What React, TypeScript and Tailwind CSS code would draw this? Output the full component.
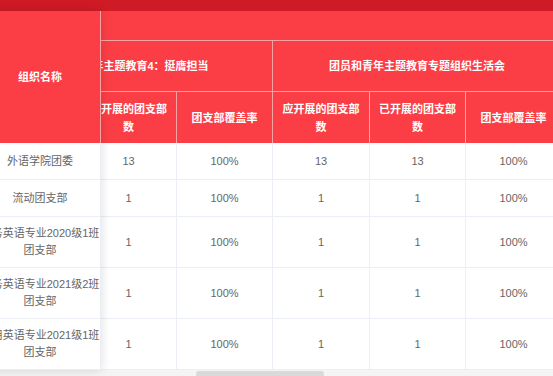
const font = { fontFamily: '"Liberation Sans", "Noto Sans CJK SC", sans-serif' }

const subHeads = ['应开展的团支部数', '已开展的团支部数', '团支部覆盖率']

type Row = {
  name: string[]
  values: string[]
}

const rows: Row[] = [
  { name: ['外语学院团委'], values: ['13', '13', '100%', '13', '13', '100%'] },
  { name: ['流动团支部'], values: ['1', '1', '100%', '1', '1', '100%'] },
  { name: ['商务英语专业2020级1班', '团支部'], values: ['1', '1', '100%', '1', '1', '100%'] },
  { name: ['商务英语专业2021级2班', '团支部'], values: ['1', '1', '100%', '1', '1', '100%'] },
  { name: ['应用英语专业2021级1班', '团支部'], values: ['1', '1', '100%', '1', '1', '100%'] },
]

const cols = 'grid grid-cols-[96px_96px_96px_97px_96px_96px]'

export default function App() {
  return (
    <div className="w-[553px] h-[376px] overflow-hidden bg-white text-[11px]" style={font}>
      <div className="h-[11px] bg-[#cf1b26]" />

      <div className="flex">
        {/* fixed name column */}
        <div className="relative z-10 -ml-[20px] w-[121px] shrink-0 bg-white shadow-[0_0_10px_rgba(0,0,0,0.14)]">
          <div className="h-[132px] flex items-center justify-center bg-[#fb3e45] border-r border-[#f9a3a5] text-white font-bold">
            组织名称
          </div>
          {rows.map((r) => (
            <div
              key={r.name.join('')}
              className={`${r.name.length > 1 ? 'h-[51px]' : 'h-[37px]'} flex flex-col items-center justify-center border-b border-r border-[#ebeef5] leading-[17px] text-[#666]`}
            >
              {r.name.map((line) => (
                <span key={line} className="whitespace-nowrap">
                  {line}
                </span>
              ))}
            </div>
          ))}
        </div>

        {/* scrolled part */}
        <div className="flex-1 overflow-hidden">
          <div className="-ml-[116px] w-[577px]">
            <div className={`${cols} grid-rows-[30px_51px_51px] bg-[#fb3e45] text-white font-bold leading-[18px]`}>
              <div className="col-span-6 border-b border-[#f9a3a5]" />
              <div className="col-span-3 flex items-center justify-center border-b border-r border-[#f9a3a5]">
                团员和青年主题教育4：挺膺担当
              </div>
              <div className="col-span-3 flex items-center justify-center border-b border-r border-[#f9a3a5]">
                团员和青年主题教育专题组织生活会
              </div>
              {[...subHeads, ...subHeads].map((h, i) => (
                <div
                  key={i}
                  className="flex items-center justify-center px-[6px] text-center border-r border-[#f9a3a5]"
                >
                  {h}
                </div>
              ))}
            </div>

            {rows.map((r) => (
              <div key={r.name.join('')} className={`${cols} ${r.name.length > 1 ? 'h-[51px]' : 'h-[37px]'} text-[#666]`}>
                {r.values.map((v, i) => (
                  <div
                    key={i}
                    className="flex items-center justify-center border-b border-r border-[#ebeef5]"
                  >
                    {v}
                  </div>
                ))}
              </div>
            ))}
          </div>
        </div>
      </div>

      {/* horizontal scrollbar */}
      <div className="h-[6px] bg-[#f4f4f4] pl-[196px] pt-[1px]">
        <div className="w-[128px] h-[6px] rounded-[3px] bg-[#d9d9d9]" />
      </div>
    </div>
  )
}
